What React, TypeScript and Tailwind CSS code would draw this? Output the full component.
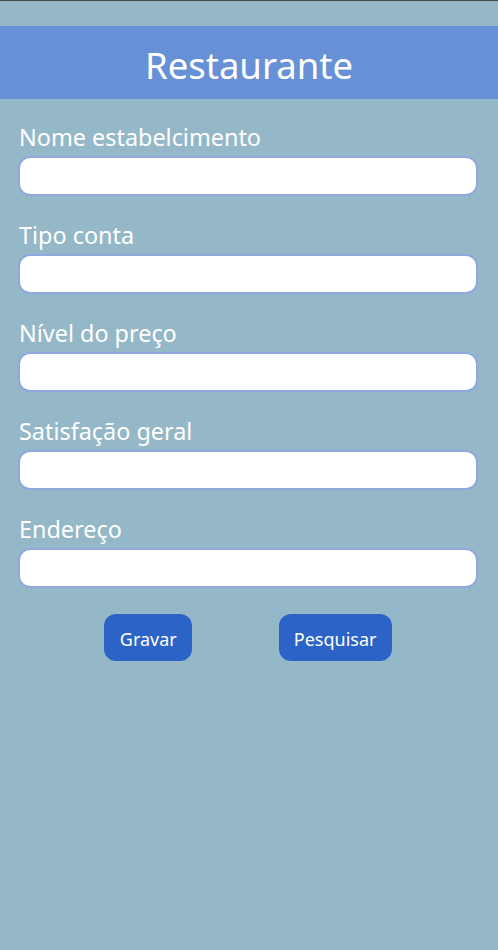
import React from "react";

const fields = ["Nome estabelcimento", "Tipo conta", "Nível do preço", "Satisfação geral", "Endereço"];

export default function App() {
  return (
    <div className="min-h-[950px] w-full bg-[#95b8c8] border-t border-[#4a4a4a]" style={{ fontFamily: '"Noto Sans", "Open Sans", sans-serif' }}>
      <div className="h-[25px]" />
      <div className="h-[73px] bg-[#6890d6] flex items-center justify-center pt-[5px]">
        <h1 className="text-white text-[36.5px] leading-none">Restaurante</h1>
      </div>
      <div className="pl-[18px] pr-[20px] pt-[23px] flex flex-col gap-[24px]">
        {fields.map((f) => (
          <div key={f} className="flex flex-col">
            <label className="text-white text-[23.4px] leading-[30px] mb-[4px] pl-[1px]">{f}</label>
            <input className="h-[40px] w-full bg-white border-2 border-[#8fa8e0] rounded-[12px] outline-none px-3" />
          </div>
        ))}
      </div>
      <div className="ml-[18px] mr-[20px] mt-[26px] flex justify-evenly">
        <button className="w-[88px] h-[47px] bg-[#2b63c6] text-white text-[18px] rounded-[12px] pt-[3px]">Gravar</button>
        <button className="w-[113px] h-[47px] bg-[#2b63c6] text-white text-[18px] rounded-[12px] pt-[3px]">Pesquisar</button>
      </div>
    </div>
  );
}
